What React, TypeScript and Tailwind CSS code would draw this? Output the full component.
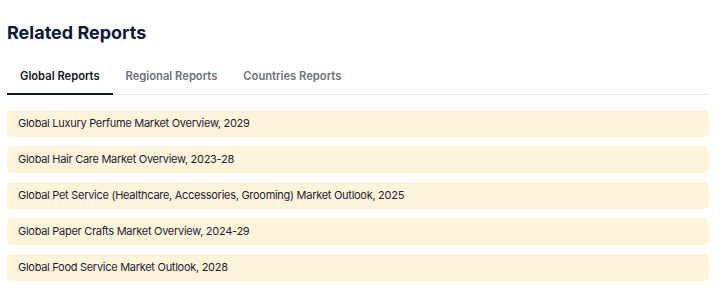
import { useState } from "react";

const tabs = ["Global Reports", "Regional Reports", "Countries Reports"];

const reports = [
    "Global Luxury Perfume Market Overview, 2029",
    "Global Hair Care Market Overview, 2023-28",
    "Global Pet Service (Healthcare, Accessories, Grooming) Market Outlook, 2025",
    "Global Paper Crafts Market Overview, 2024-29",
    "Global Food Service Market Outlook, 2028",
];

export default function App() {
    const [active, setActive] = useState(0);

    return (
        <div className="w-[723px] h-[300px] bg-white pl-[7px] pr-[14px] pt-[21px] font-['Inter',sans-serif]">
            <h2 className="text-[18px] leading-[24px] font-bold text-[#0b1a33]">Related Reports</h2>

            <div className="mt-[20px] flex border-b border-[#e5e7eb]">
                {tabs.map((tab, index) => (
                    <button
                        key={tab}
                        onClick={() => setActive(index)}
                        className={
                            index === active
                                ? "px-[13px] pb-[9px] pt-[3px] text-[11.2px] leading-[16px] font-semibold text-[#111827] border-b-2 border-[#0b1a33] -mb-px"
                                : "px-[13px] pb-[9px] pt-[3px] text-[11.2px] leading-[16px] font-semibold text-[#6b7280] border-b-2 border-transparent -mb-px"
                        }
                    >
                        {tab}
                    </button>
                ))}
            </div>

            <div className="mt-[15px] flex flex-col gap-[9px]">
                {reports.map((report) => (
                    <a
                        key={report}
                        href="#"
                        className="block h-[27px] rounded-[5px] bg-[#fef4d9] px-[11px] text-[11px] tracking-[-0.28px] leading-[27px] text-[#1a2238]"
                    >
                        {report}
                    </a>
                ))}
            </div>
        </div>
    );
}
